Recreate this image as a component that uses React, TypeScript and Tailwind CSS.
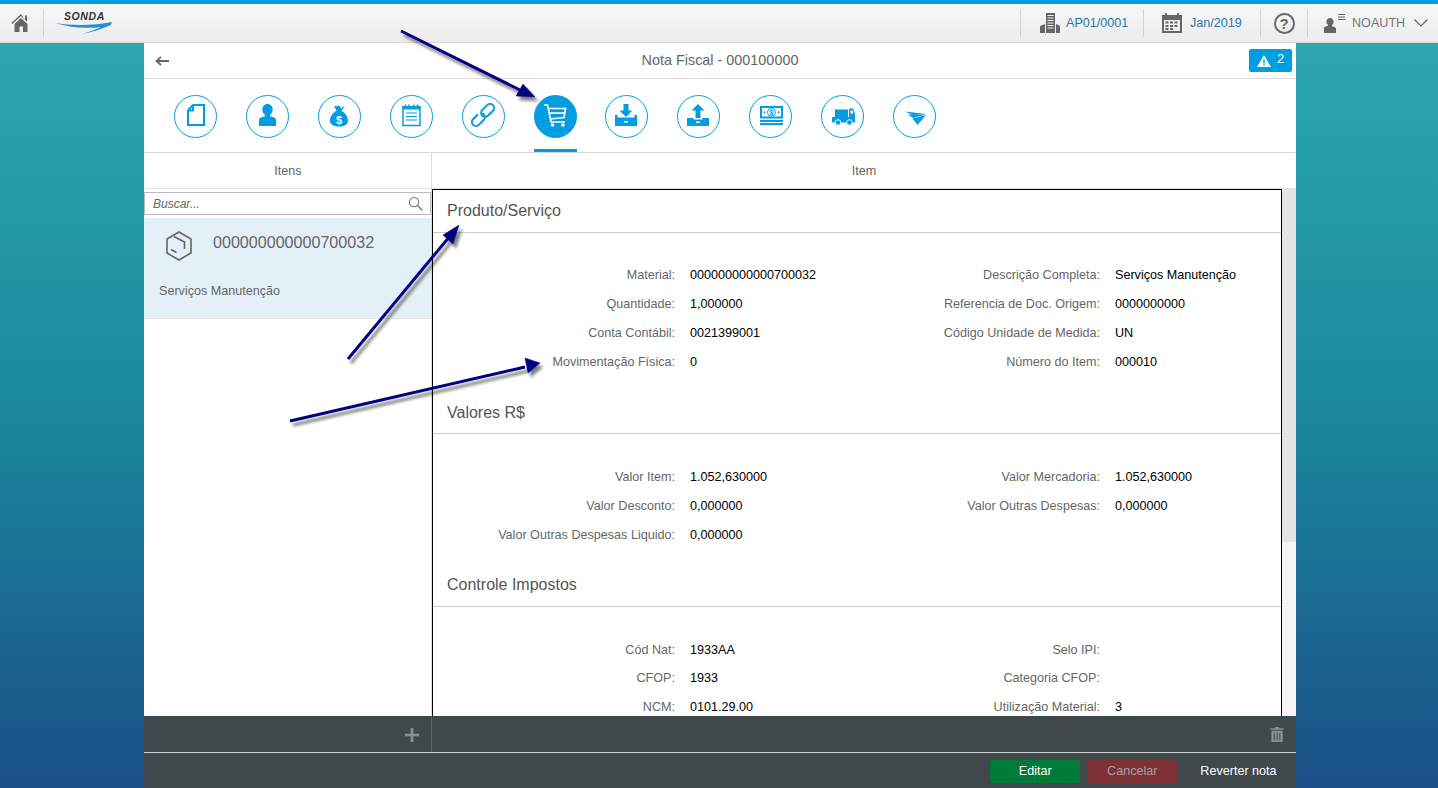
import React from "react";

const BLUE = "#009de0";

const tabIcons: React.ReactNode[] = [
  // documento
  <path key="doc" d="M19 10h11v20H14V15.500zM19 10v5.500h-5" fill="none" stroke={BLUE} strokeWidth="2" />,
  // pessoa
  <path key="person" d="M21.500 9c3.300 0 5.200 2.600 5.200 5.600 0 2.200-1 4.200-2.500 5.200v1.400l4 1.400c1.300.5 1.800 1.400 1.800 2.600V31H13v-5.800c0-1.200.5-2.100 1.800-2.600l4-1.400v-1.400c-1.500-1-2.500-3-2.500-5.200 0-3 1.900-5.600 5.200-5.600z" fill={BLUE} />,
  // saco de dinheiro
  <g key="bag">
    <path d="M18.500 15.500 16 10.500l3.500 1 1.500-1.500 2 3.500 4-3-3.500 5.500c4 2 6.500 6 6.500 9.500 0 3.500-2.500 6-9 6s-9-2.500-9-6c0-3.500 2.500-7.500 6.500-10z" fill={BLUE} />
    <text x="21" y="28.500" textAnchor="middle" fontSize="11" fontWeight="700" fontFamily="Liberation Sans" fill="#fff">$</text>
  </g>,
  // bloco de notas
  <g key="notes" fill="none" stroke={BLUE}>
    <rect x="13" y="12" width="17" height="18.500" strokeWidth="1.500" />
    <path d="M12.500 11h18v3.500h-18z" fill={BLUE} strokeWidth="0" />
    <path d="M15.500 9.500v2M19 9.500v2M24 9.500v2M27.500 9.500v2" strokeWidth="1.500" />
    <path d="M16 18h11M16 21.500h11M16 25h11" strokeWidth="1.200" />
  </g>,
  // corrente
  <g key="link" fill="none" strokeWidth="2" transform="rotate(-45 21 20)">
    <rect x="7" y="16" width="15" height="8" rx="4" stroke={BLUE} />
    <path d="M18 16h11.500a4 4 0 0 1 0 8H25" stroke="#fff" strokeWidth="4" />
    <rect x="20" y="16" width="15" height="8" rx="4" stroke={BLUE} />
  </g>,
  // carrinho
  <g key="cart" fill="none" stroke="#fff" strokeWidth="1.700">
    <path d="M10 10h3.500l3.500 17h14" />
    <path d="M14.500 13.500h17l-1.500 9-14 1.500M15.500 18.200h15.200" />
    <circle cx="18.500" cy="30" r="1.800" fill="#fff" stroke="none" />
    <circle cx="29" cy="30" r="1.800" fill="#fff" stroke="none" />
  </g>,
  // entrada
  <path key="in" d="M18.500 9h5v6.500h4l-6.500 6.500-6.500-6.500h4zM10 20h2.500v2.500h17V20H32v11H10zM19 26v1.500h4V26z" fill={BLUE} fillRule="evenodd" />,
  // saida
  <path key="out" d="M21 9l6.500 6.500h-4V23h-5v-7.500h-4zM10 23h6.500v1.500h9V23H32v8H10zM19 26.500V28h4v-1.500z" fill={BLUE} fillRule="evenodd" />,
  // notas de dinheiro
  <g key="cash">
    <path d="M11 11h23v12.500H11zM11 25h23v2H11zM11 28h23v2H11z" fill={BLUE} />
    <rect x="13" y="13" width="19" height="8.500" fill="#fff" />
    <circle cx="22.500" cy="17.300" r="4" fill="#fff" stroke={BLUE} />
    <text x="22.500" y="20" textAnchor="middle" fontSize="7" fontWeight="700" fontFamily="Liberation Sans" fill={BLUE}>$</text>
    <circle cx="15.500" cy="17.300" r="1" fill={BLUE} />
    <circle cx="29.500" cy="17.300" r="1" fill={BLUE} />
  </g>,
  // caminhao
  <g key="truck">
    <path d="M11 22h23v5.500H11zM14 14.500h13V22H14z" fill={BLUE} />
    <path d="M28 13.500h4l2 5v3.500h-6z" fill={BLUE} />
    <path d="M29.500 15.500h2l1 3h-3z" fill="#fff" />
    <circle cx="17" cy="27.500" r="2.800" fill={BLUE} stroke="#fff" />
    <circle cx="28.500" cy="27.500" r="2.800" fill={BLUE} stroke="#fff" />
  </g>,
  // aviao de papel
  <g key="plane" fill={BLUE}>
    <path d="M12 16.500 33 19l-13 1z" />
    <path d="M15 19.500 33 19.500 20 23z" />
    <path d="M19.500 23.500 33 20 24.500 30z" />
  </g>,
];

function Tab({ icon, active }: { icon: React.ReactNode; active?: boolean }) {
  return (
    <div className={`h-[57px] w-[43px] border-b-[3px] ${active ? "border-[#009de0]" : "border-transparent"}`}>
      <div className={`h-[43px] w-[43px] rounded-full border border-[#009de0] ${active ? "bg-[#009de0]" : "bg-white"}`}>
        <svg viewBox="0 0 43 43" className="-m-px h-[43px] w-[43px]">
          {icon}
        </svg>
      </div>
    </div>
  );
}

function Divider() {
  return <div className="h-[28px] w-px bg-[#d4d4d4]" />;
}

function Field({ label, value, h }: { label: string; value?: string; h: string }) {
  return (
    <div className={`flex items-center gap-[15px] ${h}`}>
      <div className="w-[242px] shrink-0 text-right text-[#666]">{label}</div>
      <div className="text-black">{value}</div>
    </div>
  );
}

function Section({ title, rows, h, pad, head }: { title: string; rows: [string, string?][]; h: string; pad: string; head: string }) {
  return (
    <div>
      <div className={`border-b border-[#cccccc] pl-[14px] text-[16px] text-[#555] ${head}`}>{title}</div>
      <div className={`grid grid-cols-[425px_425px] ${pad}`}>
        {rows.map((r, i) => (
          <Field key={i} label={r[0]} value={r[1]} h={h} />
        ))}
      </div>
    </div>
  );
}

export default function App() {
  return (
    <div className="relative flex h-[788px] flex-col overflow-hidden bg-linear-to-b from-[#2eabb3] via-[#1b8a9e] to-[#1a4f87] font-['Liberation_Sans',Arial,sans-serif] text-[12.6px]">
      {/* barra superior */}
      <header className="flex h-[43px] shrink-0 items-center border-t-4 border-b border-t-[#009de0] border-b-[#d9d9d9] bg-linear-to-b from-[#f7f7f7] to-[#ececec]">
        <div className="flex w-[43px] justify-center pr-[2px]">
          <svg viewBox="0 0 20 20" className="h-[20px] w-[20px]" fill="#666">
            <path d="M10 1 0.500 10l1 1L10 3l6 5.700V2.500h-2V6.800zM3.500 11 10 5l6.500 6v8H12v-5.500H8.500V19h-5z" />
          </svg>
        </div>
        <Divider />
        <div className="relative ml-[11px] h-[26px] w-[58px]">
          <span className="absolute left-[9px] top-0 text-[10.500px] font-bold italic leading-[12px] tracking-[0.6px] text-[#333]">SONDA</span>
          <svg viewBox="0 0 58 26" className="absolute inset-0 h-[26px] w-[58px]">
            <path d="M0 13c14 2.500 38 3 57-1l-1 3c-9 4-18 7-29 9 8-2 14-5 19-7-15 2-32 .5-46-4z" fill="#2a8fd0" />
          </svg>
        </div>
        <div className="flex-1" />
        <Divider />
        <div className="flex w-[122px] items-center gap-[6px] pl-[19px] text-[#1f77ab]">
          <svg viewBox="0 0 20 20" className="h-[20px] w-[20px]" fill="#666">
            <path d="M6 0h9v20H6zM7.500 2v1h6V2zM7.500 4.500v1h6v-1zM7.500 7v1h6V7zM7.500 9.500v1h6v-1zM7.500 12v1h6v-1zM7.500 14.500v1h6v-1z" fillRule="evenodd" />
            <path d="M0 13l5-2v9H0zM16 11l4 2v7h-4z" />
          </svg>
          AP01/0001
        </div>
        <Divider />
        <div className="flex w-[116px] items-center gap-[8px] pl-[18px] text-[#1f77ab]">
          <svg viewBox="0 0 20 20" className="h-[20px] w-[20px]" fill="#666">
            <path d="M0 2h3V0h2v2h10V0h2v2h3v18H0zM2 7v11h16V7z" fillRule="evenodd" />
            <path d="M3.500 8.500h3v2h-3zM8 8.500h3v2H8zM12.500 8.500h3v2h-3zM3.500 12h3v2h-3zM8 12h3v2H8zM12.500 12h3v2h-3zM3.500 15h3v2h-3zM8 15h3v2H8z" />
          </svg>
          Jan/2019
        </div>
        <Divider />
        <div className="flex w-[46px] justify-center">
          <div className="flex h-[21px] w-[21px] items-center justify-center rounded-full border-2 border-[#666] text-[15px] font-bold leading-none text-[#666]">?</div>
        </div>
        <Divider />
        <div className="flex w-[130px] items-center pl-[16px] text-[#777]">
          <svg viewBox="0 0 22 20" className="h-[20px] w-[22px]" fill="#666">
            <path d="M6 5c2.300 0 3.600 1.800 3.600 3.800 0 1.500-.7 2.700-1.600 3.400v1l3 1c.7.300 1 .8 1 1.500V20H0v-4.800c0-.7.300-1.200 1-1.500l3-1v-1C3.100 11.500 2.400 10.300 2.400 8.800 2.400 6.800 3.700 5 6 5z" />
            <path d="M14 1h7v1h-7zM14 3.500h7v1h-7zM14 6h7v1h-7z" />
          </svg>
          <span className="ml-[6px]">NOAUTH</span>
          <svg viewBox="0 0 14 8" className="ml-[9px] h-[8px] w-[14px]" fill="none" stroke="#666" strokeWidth="1.200">
            <path d="M.5.500 7 7 13.500.5" />
          </svg>
        </div>
      </header>

      {/* painel principal */}
      <main className="ml-[144px] mr-[142px] flex min-h-0 flex-1 flex-col bg-white">
        <div className="flex h-[36px] shrink-0 items-center border-b border-[#dddddd] pr-[4px]">
          <svg viewBox="0 0 14 10" className="ml-[11px] h-[10px] w-[14px]" fill="none" stroke="#666" strokeWidth="1.800">
            <path d="M14 5H1.500M6 .8 1.500 5 6 9.200" />
          </svg>
          <div className="flex-1 pl-[22px] text-center text-[14.400px] text-[#666]">Nota Fiscal - 000100000</div>
          <div className="flex h-[23px] w-[43px] items-center justify-center gap-[6px] rounded-[2px] bg-[#009de0] text-[13px] text-white">
            <svg viewBox="0 0 14 12" className="h-[12px] w-[14px]">
              <path d="M7 0l7 12H0z" fill="#fff" />
              <path d="M6.300 4h1.400v4.500H6.300zM6.300 9.300h1.400v1.400H6.300z" fill="#009de0" />
            </svg>
            <span className="-mt-[3px]">2</span>
          </div>
        </div>
        <div className="flex h-[74px] shrink-0 items-end gap-[28.900px] border-b border-[#d9d9d9] pl-[30.100px]">
          {tabIcons.map((ic, i) => (
            <Tab key={i} icon={ic} active={i === 5} />
          ))}
        </div>

        <div className="flex min-h-0 flex-1">
          {/* coluna de itens */}
          <aside className="flex w-[288px] shrink-0 flex-col border-r border-[#dddddd]">
            <div className="h-[36px] shrink-0 border-b border-[#e2e2e2] pl-px text-center leading-[36px] text-[#666]">Itens</div>
            <div className="mt-[3px] flex h-[23px] shrink-0 items-center border border-[#bbbbbb] pl-[8px] pr-[7px] text-[12px] italic text-[#666]">
              <span className="flex-1">Buscar...</span>
              <svg viewBox="0 0 16 16" className="h-[15px] w-[15px]" fill="none" stroke="#777" strokeWidth="1.100">
                <circle cx="6.500" cy="6.500" r="5" />
                <path d="m10.200 10.200 5 5" strokeWidth="1.600" />
              </svg>
            </div>
            <div className="mt-[3px] h-[101px] shrink-0 border-b border-[#e5e5e5] bg-[#e3f0f8]">
              <div className="flex pl-[22px] pt-[13px]">
                <svg viewBox="0 0 26 30" className="h-[30px] w-[26px]" fill="none" stroke="#666" strokeWidth="1.600">
                  <path d="M13 1 25 8v14l-12 7-12-7V8zM8 5.500l10.500 5.500v7M5 18.500l5.500 3" />
                </svg>
                <div className="ml-[21px] pt-[1px] text-[16.100px] leading-[20px] text-[#666]">000000000000700032</div>
              </div>
              <div className="pl-[15px] pt-[21px] text-[#666]">Serviços Manutenção</div>
            </div>
            <div className="flex-1" />
          </aside>

          {/* coluna do item */}
          <section className="flex min-w-0 flex-1 flex-col">
            <div className="h-[36px] shrink-0 border-b border-[#e2e2e2] text-center leading-[36px] text-[#666]">Item</div>
            <div className="flex min-h-0 flex-1">
              <div className="min-w-0 flex-1 overflow-hidden border-x border-t border-black">
                <Section
                  title="Produto/Serviço"
                  head="leading-[42px]"
                  h="h-[29px]"
                  pad="pt-[28px] pb-[15px]"
                  rows={[
                    ["Material:", "000000000000700032"],
                    ["Descrição Completa:", "Serviços Manutenção"],
                    ["Quantidade:", "1,000000"],
                    ["Referencia de Doc. Origem:", "0000000000"],
                    ["Conta Contábil:", "0021399001"],
                    ["Código Unidade de Medida:", "UN"],
                    ["Movimentação Física:", "0"],
                    ["Número do Item:", "000010"],
                  ]}
                />
                <Section
                  title="Valores R$"
                  head="leading-[41px]"
                  h="h-[29px]"
                  pad="pt-[29px] pb-[13px]"
                  rows={[
                    ["Valor Item:", "1.052,630000"],
                    ["Valor Mercadoria:", "1.052,630000"],
                    ["Valor Desconto:", "0,000000"],
                    ["Valor Outras Despesas:", "0,000000"],
                    ["Valor Outras Despesas Liquido:", "0,000000"],
                  ]}
                />
                <Section
                  title="Controle Impostos"
                  head="leading-[43px]"
                  h="h-[28.500px]"
                  pad="pt-[29px]"
                  rows={[
                    ["Cód Nat:", "1933AA"],
                    ["Selo IPI:"],
                    ["CFOP:", "1933"],
                    ["Categoria CFOP:"],
                    ["NCM:", "0101.29.00"],
                    ["Utilização Material:", "3"],
                  ]}
                />
              </div>
              {/* barra de rolagem */}
              <div className="flex w-[14px] shrink-0 flex-col bg-[#f5f5f5]">
                <div className="h-[353px] bg-[#e5e5e5]" />
              </div>
            </div>
          </section>
        </div>

        <div className="flex h-[36px] shrink-0 bg-[#3f484b] pt-px">
          <div className="flex w-[288px] items-center justify-end border-r border-[#5a6265] pr-[12px]">
            <svg viewBox="0 0 14 14" className="h-[14px] w-[14px]" fill="#8a8f91">
              <path d="M5.700 0h2.600v5.700H14v2.600H8.300V14H5.700V8.300H0V5.700h5.700z" />
            </svg>
          </div>
          <div className="flex flex-1 items-center justify-end pr-[12px]">
            <svg viewBox="0 0 14 16" className="h-[15px] w-[14px]" fill="#8a8f91">
              <path d="M5 0h4v1.200h5v1.600H0V1.200h5zM1 4h12v12H1zM3.500 6v8h1V6zM6.500 6v8h1V6zM9.500 6v8h1V6z" fillRule="evenodd" />
            </svg>
          </div>
        </div>
        <div className="flex h-[36px] shrink-0 items-center justify-end gap-[7px] border-t border-[#d0d3d4] bg-[#3f484b] pr-[19.400px] pt-[2px]">
          <div className="flex h-[23px] w-[90px] items-center justify-center rounded-[2px] bg-[#007a37] text-white">Editar</div>
          <div className="flex h-[23px] w-[90px] items-center justify-center rounded-[2px] bg-[#7f3035] text-[#a3a3a3]">Cancelar</div>
          <div className="ml-[16px] text-white">Reverter nota</div>
        </div>
      </main>

      {/* setas de anotacao */}
      <svg className="pointer-events-none absolute inset-0 h-[788px] w-[1438px]" viewBox="0 0 1438 788">
        <defs>
          <filter id="sombra" x="-20%" y="-20%" width="150%" height="150%">
            <feDropShadow dx="3" dy="4" stdDeviation="1.800" floodColor="#000" floodOpacity="0.5" />
          </filter>
        </defs>
        <g fill="#000080" stroke="#000080" filter="url(#sombra)">
          <path d="M401 31 522 91" strokeWidth="3" />
          <path d="M535 97 516 96 523 84z" strokeWidth="0.500" />
          <path d="M348 359 450 236" strokeWidth="3" />
          <path d="M459 225 453 244 443 235z" strokeWidth="0.500" />
          <path d="M290 421 525 367" strokeWidth="3" />
          <path d="M540 363 528 373 525 358z" strokeWidth="0.500" />
        </g>
      </svg>
    </div>
  );
}
